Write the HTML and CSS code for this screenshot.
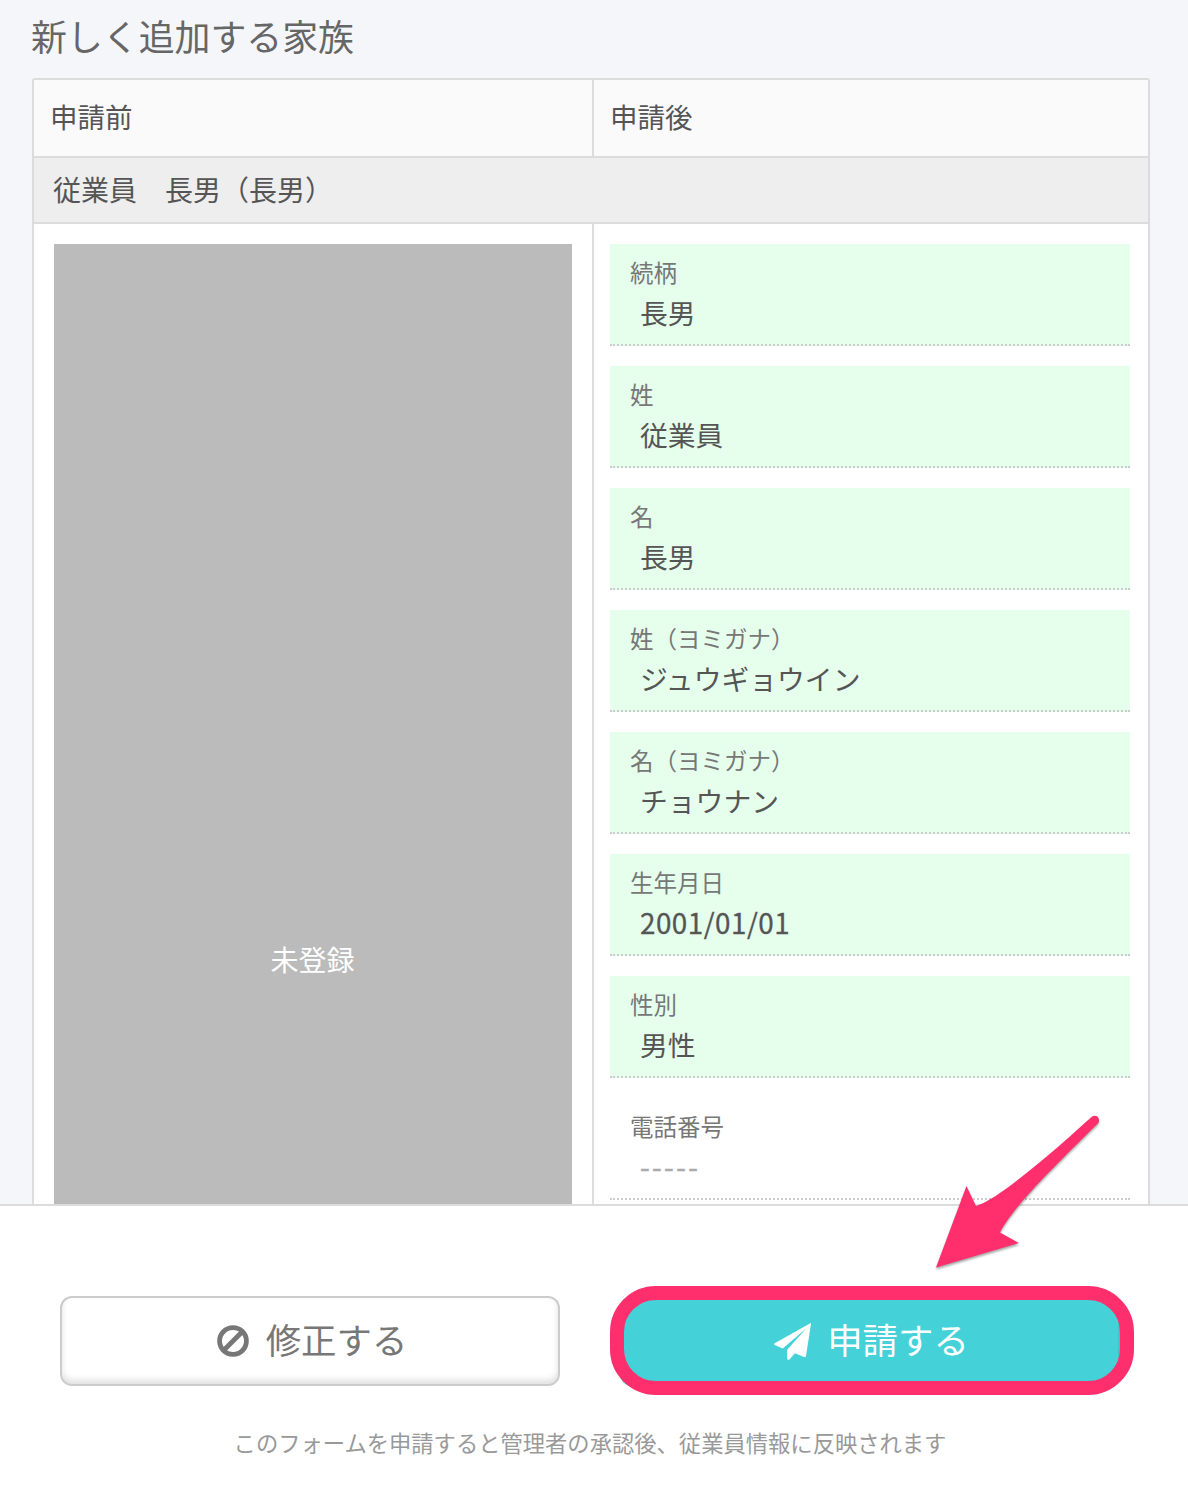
FILE: index.html
```html
<!DOCTYPE html>
<html lang="ja">
<head>
<meta charset="utf-8">
<title>新しく追加する家族</title>
<link rel="stylesheet" href="styles.css">
</head>
<body>
<div class="page">
  <main class="content">
    <h1 class="title">新しく追加する家族</h1>
    <section class="compare">
      <div class="row head">
        <div class="cell">申請前</div>
        <div class="cell">申請後</div>
      </div>
      <div class="group">従業員　長男（長男）</div>
      <div class="row body">
        <div class="before"><div class="empty">未登録</div></div>
        <dl class="after">
          <div class="field changed"><dt>続柄</dt><dd>長男</dd></div>
          <div class="field changed"><dt>姓</dt><dd>従業員</dd></div>
          <div class="field changed"><dt>名</dt><dd>長男</dd></div>
          <div class="field changed"><dt>姓（ヨミガナ）</dt><dd>ジュウギョウイン</dd></div>
          <div class="field changed"><dt>名（ヨミガナ）</dt><dd>チョウナン</dd></div>
          <div class="field changed"><dt>生年月日</dt><dd class="date">2001/01/01</dd></div>
          <div class="field changed"><dt>性別</dt><dd>男性</dd></div>
          <div class="field"><dt>電話番号</dt><dd class="none">-----</dd></div>
        </dl>
      </div>
    </section>
  </main>
  <footer class="actions">
    <div class="buttons">
      <button class="btn edit" type="button">
        <svg class="ban" viewBox="0 0 32 32"><circle cx="16" cy="16" r="13.4"/><path d="M6.8 25.2 25.2 6.8"/></svg>
        <span>修正する</span>
      </button>
      <button class="btn submit" type="button">
        <svg class="plane" viewBox="0 0 36 36"><path d="M35.3.2.7 19.6c-.9.5-.9 1.4.1 1.8L8.500 24.900 31.500 5 12.800 26V34.300c0 1.500 1.600 2 2.500.9l5-5.700 9 3.700c.8.3 1.700-.1 1.800-1L36 .9c.1-.6-.2-.9-.7-.7Z"/></svg>
        <span>申請する</span>
      </button>
    </div>
    <p class="note">このフォームを申請すると管理者の承認後、従業員情報に反映されます</p>
  </footer>
  <div class="highlight"></div>
  <svg class="arrow" viewBox="0 0 180 170"><path d="M11 162.500 41.500 81 51 101C71 95 117 57 166.500 12c4.500-3.500 9.500 1 6.800 6C138 53 88 101 75 127.500L94 138Z"/></svg>
</div>
</body>
</html>
```
FILE: styles.css
```css
* { box-sizing: border-box; }
body {
  margin: 0;
  font-family: "Noto Sans CJK JP", sans-serif;
  font-size: 28px;
  color: #555;
  background: #f5f6fa;
}
.page {
  position: relative;
  display: flex;
  flex-direction: column;
  height: 1506px;
  overflow: hidden;
}
.content {
  flex: 1;
  min-height: 0;
  overflow: hidden;
  padding: 0 38px 0 32px;
}
.title {
  margin: 0 0 0 -1px;
  height: 78px;
  line-height: 70px;
  font-size: 35.9px;
  font-weight: 400;
  color: #666;
}
.compare {
  border: 2px solid #dcdcdc;
  border-radius: 3px;
  background: #fff;
}
.row {
  display: grid;
  grid-template-columns: 558px 1fr;
}
.head { background: #fafafa; }
.cell {
  height: 76px;
  padding-left: 16px;
  line-height: 73px;
  font-size: 27.5px;
}
.cell + .cell, .after { border-left: 2px solid #dcdcdc; }
.group {
  height: 68px;
  border: solid #dcdcdc;
  border-width: 2px 0;
  padding-left: 19px;
  line-height: 62px;
  background: #eee;
}
.before { padding: 20px; }
.empty {
  display: flex;
  align-items: center;
  justify-content: center;
  height: 1432px;
  padding: 0 1px 2px 0;
  background: #bbb;
  color: #fff;
}
.after {
  margin: 0;
  padding: 20px 18px 20px 16px;
}
.field {
  height: 102px;
  margin-bottom: 20px;
  padding: 10px 20px 0;
  border-bottom: 2px dotted #ccc;
}
.changed { background: #e5ffec; }
dt {
  height: 36px;
  line-height: 36px;
  font-size: 23.5px;
  color: #777;
}
dd {
  margin: 0 0 0 10px;
  line-height: 45px;
  font-size: 27.8px;
}
.date {
  letter-spacing: .5px;
  -webkit-text-stroke: .3px currentColor;
}
.none {
  color: #aaa;
  letter-spacing: 2.4px;
  -webkit-text-stroke: .5px currentColor;
}
.actions {
  height: 302px;
  border-top: 2px solid #dcdcdc;
  padding: 90px 68px 0 60px;
  background: #fff;
}
.buttons {
  display: grid;
  grid-template-columns: 500px 500px;
  column-gap: 60px;
}
.btn {
  display: flex;
  align-items: center;
  justify-content: center;
  gap: 17px;
  height: 90px;
  padding: 0 0 0 4px;
  border: 2px solid #ccc;
  border-radius: 12px;
  font: 35.4px "Noto Sans CJK JP", sans-serif;
}
.btn span {
  line-height: 82px;
  padding-bottom: 4px;
}
.edit {
  background: #fff;
  color: #777;
  box-shadow: inset 0 -4px 6px rgba(0, 0, 0, .12);
}
.submit {
  gap: 16px;
  padding-left: 3px;
  border-color: #3fc4cc;
  background: #44d1d8;
  color: #fff;
}
.ban {
  width: 32px;
  height: 32px;
  fill: none;
  stroke: currentColor;
  stroke-width: 4.8;
}
.plane {
  width: 37px;
  height: 37px;
  fill: currentColor;
}
.note {
  margin: 36px 0 0;
  line-height: 40px;
  text-align: center;
  font-size: 22.3px;
  color: #999;
}
.highlight {
  position: absolute;
  left: 610px;
  top: 1286px;
  width: 524px;
  height: 109px;
  border: 14px solid #ff2f6e;
  border-radius: 46px;
}
.arrow {
  position: absolute;
  left: 925px;
  top: 1105px;
  width: 180px;
  height: 170px;
  fill: #ff2f6e;
  filter: drop-shadow(0 2px 1px rgba(0, 0, 0, .35));
}
```
